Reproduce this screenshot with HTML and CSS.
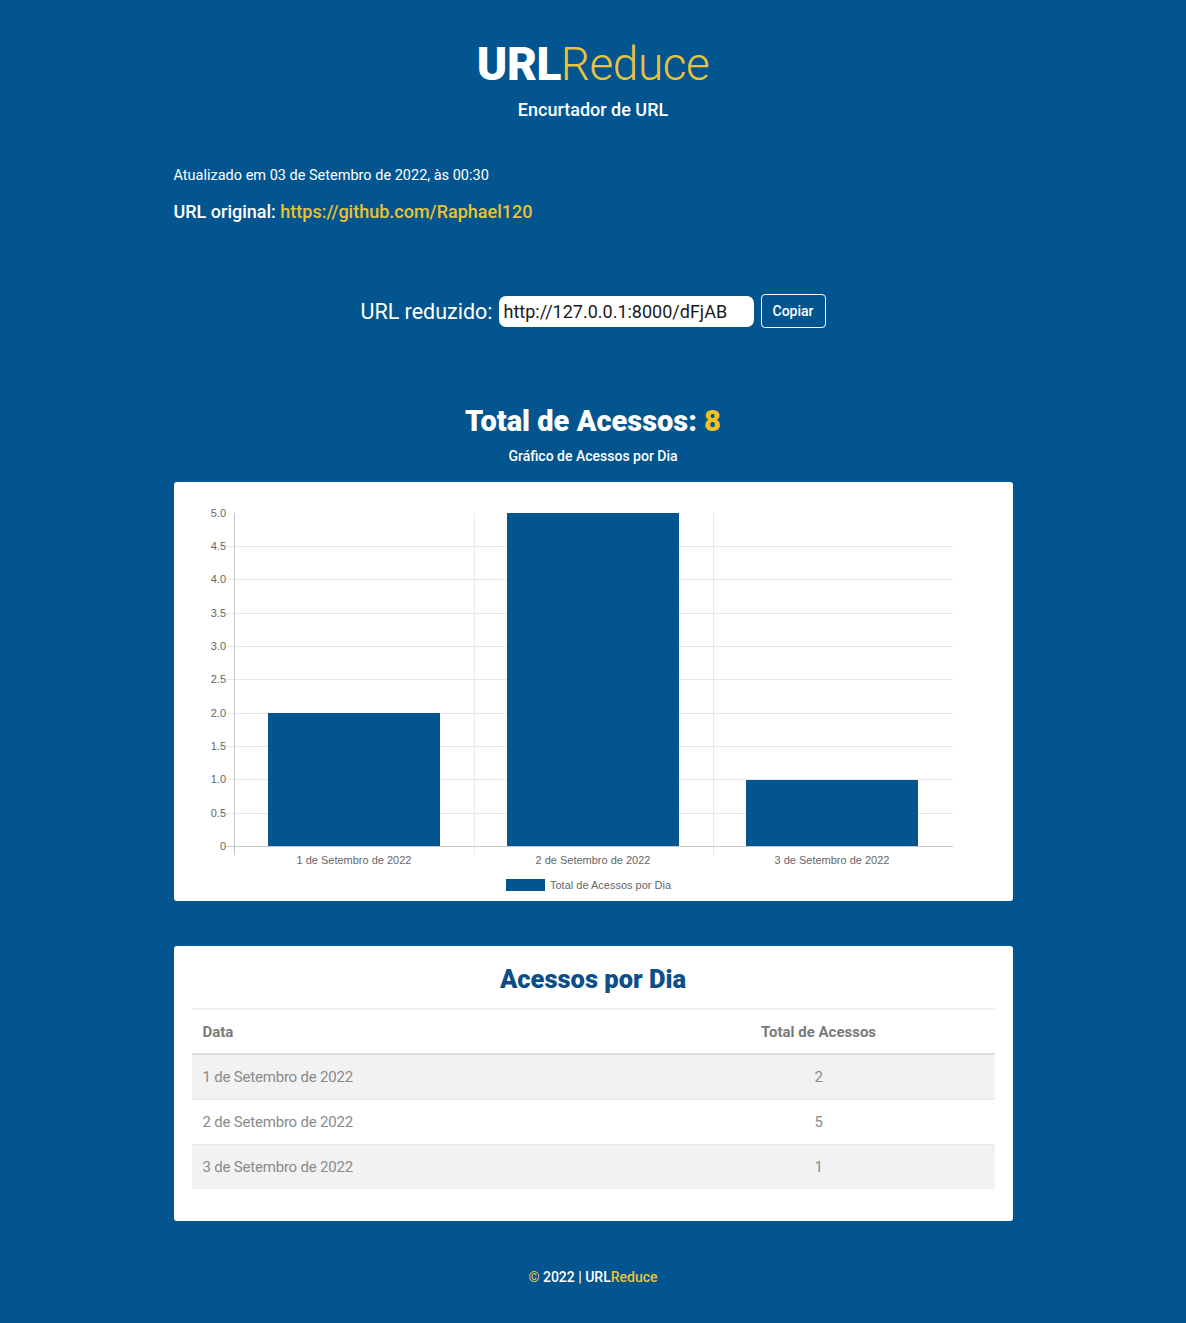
FILE: index.html
```html
<!DOCTYPE html>
<html lang="pt-BR">
<head>
<meta charset="utf-8">
<title>URLReduce</title>
<link rel="stylesheet" href="styles.css">
</head>
<body>
<header class="header">
  <h1 class="logo"><span class="logo-bold">URL</span><span class="logo-light">Reduce</span></h1>
  <p class="tagline">Encurtador de URL</p>
</header>

<main class="container">
  <section class="info">
    <p class="updated">Atualizado em 03 de Setembro de 2022, às 00:30</p>
    <p class="original">URL original: <a class="link" href="#">https://github.com/Raphael120</a></p>
  </section>

  <section class="short">
    <label class="short-label" for="short">URL reduzido:</label>
    <input class="short-input" id="short" type="text" value="http://127.0.0.1:8000/dFjAB" readonly>
    <button class="copy-btn" type="button">Copiar</button>
  </section>

  <section class="totals">
    <h2 class="total-title">Total de Acessos: <span class="total-num">8</span></h2>
    <p class="chart-caption">Gráfico de Acessos por Dia</p>
  </section>

  <section class="card chart-card">
    <svg class="chart" width="839" height="419" viewBox="0 0 839 419" xmlns="http://www.w3.org/2000/svg">
      <g stroke="#e8e8e8" stroke-width="1">
        <line x1="52" y1="64.5" x2="779" y2="64.5"/>
        <line x1="52" y1="97.5" x2="779" y2="97.5"/>
        <line x1="52" y1="131.5" x2="779" y2="131.5"/>
        <line x1="52" y1="164.5" x2="779" y2="164.5"/>
        <line x1="52" y1="197.5" x2="779" y2="197.5"/>
        <line x1="52" y1="231.5" x2="779" y2="231.5"/>
        <line x1="52" y1="264.5" x2="779" y2="264.5"/>
        <line x1="52" y1="297.5" x2="779" y2="297.5"/>
        <line x1="52" y1="331.5" x2="779" y2="331.5"/>
        <line x1="300.5" y1="31" x2="300.5" y2="373"/>
        <line x1="539.5" y1="31" x2="539.5" y2="373"/>
      </g>
      <g fill="#02558f">
        <rect x="94" y="231" width="172" height="133"/>
        <rect x="333" y="31" width="172" height="333"/>
        <rect x="572" y="298" width="172" height="66"/>
      </g>
      <g stroke="#c8c8c8" stroke-width="1">
        <line x1="60.5" y1="31" x2="60.5" y2="373"/>
        <line x1="52" y1="364.5" x2="779" y2="364.5"/>
      </g>
      <g class="tick" text-anchor="end">
        <text x="52" y="35">5.0</text>
        <text x="52" y="68">4.5</text>
        <text x="52" y="101">4.0</text>
        <text x="52" y="135">3.5</text>
        <text x="52" y="168">3.0</text>
        <text x="52" y="201">2.5</text>
        <text x="52" y="235">2.0</text>
        <text x="52" y="268">1.5</text>
        <text x="52" y="301">1.0</text>
        <text x="52" y="335">0.5</text>
        <text x="52" y="368">0</text>
      </g>
      <g class="tick" text-anchor="middle">
        <text x="180" y="382">1 de Setembro de 2022</text>
        <text x="419" y="382">2 de Setembro de 2022</text>
        <text x="658" y="382">3 de Setembro de 2022</text>
      </g>
      <rect x="332" y="397" width="39" height="12" fill="#02558f"/>
      <text class="tick" x="376" y="407">Total de Acessos por Dia</text>
    </svg>
  </section>

  <section class="card table-card">
    <h2 class="table-title">Acessos por Dia</h2>
    <table class="table">
      <thead>
        <tr><th class="col-date">Data</th><th class="col-total">Total de Acessos</th></tr>
      </thead>
      <tbody>
        <tr class="striped"><td class="col-date">1 de Setembro de 2022</td><td class="col-total">2</td></tr>
        <tr><td class="col-date">2 de Setembro de 2022</td><td class="col-total">5</td></tr>
        <tr class="striped"><td class="col-date">3 de Setembro de 2022</td><td class="col-total">1</td></tr>
      </tbody>
    </table>
  </section>
</main>

<footer class="footer">
  <span class="yellow">©</span> 2022 | URL<span class="yellow">Reduce</span>
</footer>
</body>
</html>
```

FILE: styles.css
```css
* { box-sizing: border-box; }

html, body {
  margin: 0;
  padding: 0;
  background: #02558f;
}

body {
  font-family: Roboto, "Liberation Sans", Arial, sans-serif;
  color: #ffffff;
  min-height: 1323px;
}

.header {
  text-align: center;
  padding-top: 36px;
}

.logo {
  margin: 0;
  font-size: 46px;
  line-height: 56px;
  letter-spacing: -0.5px;
}

.logo-bold { font-weight: 900; color: #ffffff; }
.logo-light { font-weight: 300; color: #e7c33e; }

.tagline {
  margin: 7px 0 0;
  font-size: 18px;
  line-height: 22px;
  font-weight: 500;
}

.container {
  width: 839px;
  margin: 0 auto;
}

.info { margin-top: 45px; }

.updated {
  margin: 0;
  font-size: 14.5px;
  line-height: 20px;
  font-weight: 400;
}

.original {
  margin: 15px 0 0;
  font-size: 18px;
  line-height: 22px;
  font-weight: 500;
}

.link {
  color: #e9c232;
  text-decoration: none;
}

.short {
  display: flex;
  justify-content: center;
  align-items: center;
  margin-top: 70px;
  height: 36px;
}

.short-label {
  font-size: 21.5px;
  margin-right: 6px;
  font-weight: 400;
}

.short-input {
  width: 255px;
  height: 31px;
  border: none;
  border-radius: 7px;
  padding: 0 5px;
  font-family: Roboto, "Liberation Sans", Arial, sans-serif;
  font-size: 18px;
  color: #1a1a1a;
  background: #fff;
  margin-right: 7px;
}

.copy-btn {
  width: 65px;
  height: 34px;
  border: 1px solid #ffffff;
  border-radius: 4px;
  background: transparent;
  color: #fff;
  font-family: Roboto, "Liberation Sans", Arial, sans-serif;
  font-size: 14px;
  font-weight: 500;
  padding: 0;
}

.totals {
  text-align: center;
  margin-top: 75px;
}

.total-title {
  margin: 0;
  font-size: 29px;
  line-height: 34px;
  font-weight: 900;
}

.total-num { color: #f3c11f; }

.chart-caption {
  margin: 9px 0 0;
  font-size: 14px;
  line-height: 18px;
  font-weight: 500;
}

.card {
  background: #ffffff;
  border-radius: 3px;
}

.chart-card {
  margin-top: 17px;
  height: 419px;
}

.chart { display: block; }

.tick {
  font-family: "Liberation Sans", Arial, sans-serif;
  font-size: 11px;
  fill: #666666;
}

.table-card {
  margin-top: 45px;
  padding: 0 18px 32px;
  color: #888;
}

.table-title {
  margin: 0;
  padding-top: 17px;
  padding-bottom: 13px;
  text-align: center;
  font-size: 25.5px;
  line-height: 32px;
  font-weight: 900;
  color: #0d4e88;
  border-bottom: 2px solid #eeeeee;
}

.table {
  width: 100%;
  border-collapse: collapse;
}

.table th {
  height: 44px;
  font-size: 15px;
  font-weight: 700;
  color: #7a7a7a;
  border-bottom: 2px solid #dedede;
}

.table td {
  height: 45px;
  font-size: 15px;
  font-weight: 400;
  color: #8a8a8a;
  border-bottom: 1px solid #e8e8e8;
  letter-spacing: -0.2px;
}

.table tbody tr:last-child td { border-bottom: none; }

.col-date {
  text-align: left;
  padding-left: 11px;
}

.col-total {
  width: 352px;
  text-align: center;
}

.striped { background: #f2f2f2; }

.footer {
  text-align: center;
  margin-top: 46px;
  font-size: 14px;
  line-height: 20px;
  font-weight: 500;
  color: #fff;
}

.yellow { color: #e7c33e; }
```
